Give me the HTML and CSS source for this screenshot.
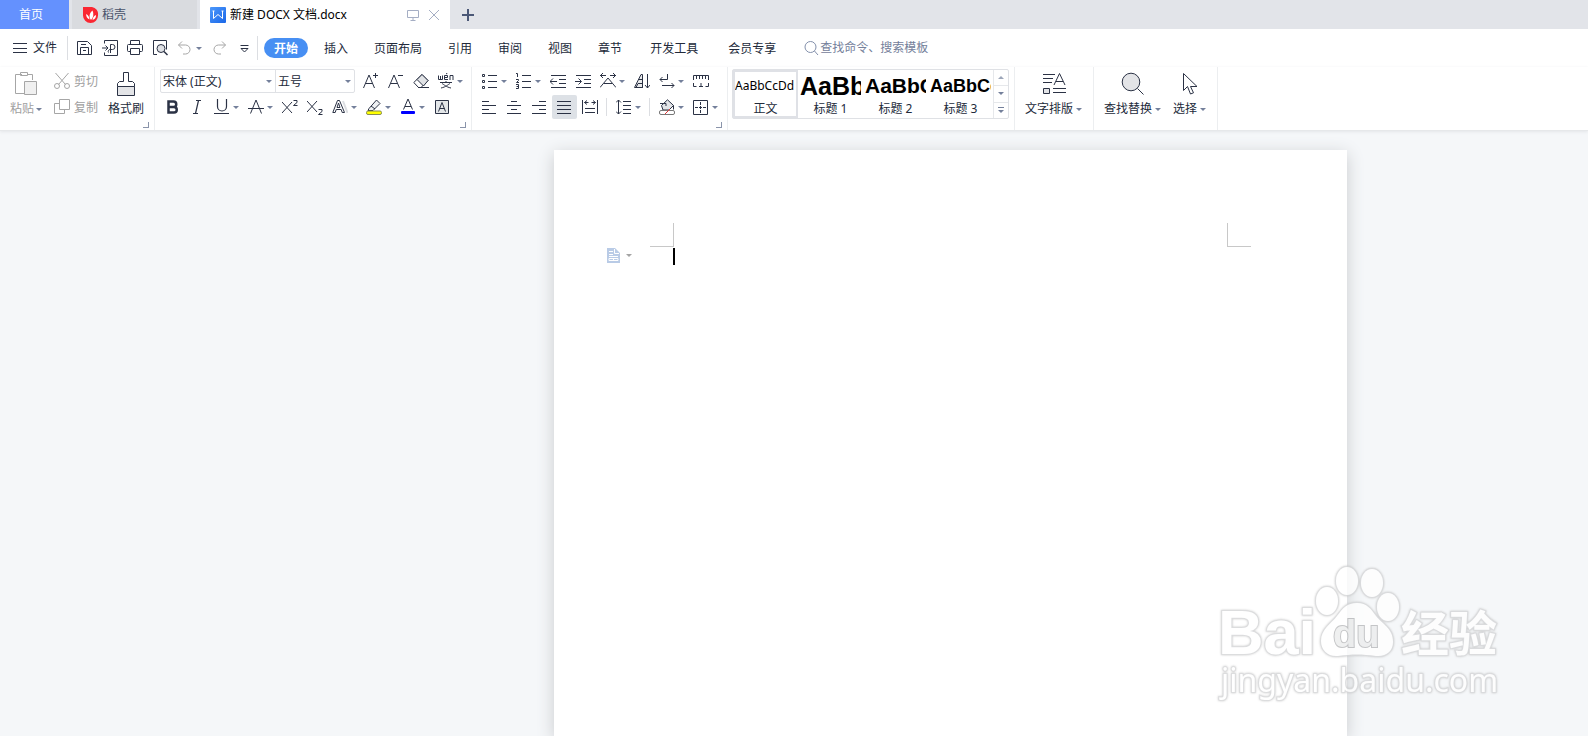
FILE: index.html
```html
<!DOCTYPE html>
<html lang="zh-CN">
  <head>
    <meta charset="utf-8">
    <title>新建 DOCX 文档.docx</title>
    <link rel="stylesheet" href="styles.css">
  </head>
  <body>

    <!-- document tabs -->
    <nav class="tabs">
      <a class="tab home" href="#">首页</a>
      <a class="tab docer" href="#">
        <svg width="16" height="16" viewBox="0 0 16 16"><path d="M0 0h9a7 7 0 0 1 6 8 7.500 7.500 0 0 1-7.500 8A7.500 7.500 0 0 1 0 8.500z" fill="#fa2732" stroke="none"/><path d="M8 13C5.500 10 6.500 6 9.500 3.500 11 7 10.500 10.500 8 13zM6.500 12.500C4 11.500 3 9.500 3.200 7c2 1 3.200 3 3.300 5.500zM9.500 13c.3-2.500 1.500-4.300 3.500-5 .2 2.500-1 4.500-3.500 5z" fill="#fff" stroke="none"/></svg>
        稻壳
      </a>
      <a class="tab active" href="#">
        <svg width="16" height="16" viewBox="0 0 16 16"><defs><linearGradient id="blue" x2="1" y2="1"><stop stop-color="#4c98fb"/><stop offset="1" stop-color="#1a67e8"/></linearGradient></defs><rect width="16" height="16" rx="1" fill="url(#blue)" stroke="none"/><path d="M2.500 4h2M3.500 4v7.500L8 7.500l4.500 4V4M11.500 4h2" stroke="#fff"/></svg>
        <span class="name">新建 DOCX 文档.docx</span>
        <svg class="pale" width="12" height="12" viewBox="0 0 12 12"><path d="M.5 1.500h11v7H.5zM6 8.500v3M3.500 11.500h5"/></svg>
        <svg class="pale" width="12" height="12" viewBox="0 0 12 12"><path d="M1 1l10 10M11 1L1 11"/></svg>
      </a>
      <button class="new" aria-label="新建"><svg width="12" height="12" viewBox="0 0 12 12"><path d="M6 0v12M0 6h12" stroke="#4b5877" stroke-width="2"/></svg></button>
    </nav>

    <!-- menu row -->
    <div class="menu">
      <button class="file"><svg width="14" height="16" viewBox="0 0 14 16"><path d="M0 3.500h14M0 8.500h14M0 12.500h14"/></svg>文件</button>
      <span class="sep tall"></span>
      <button class="ico" aria-label="保存"><svg width="16" height="16" viewBox="0 0 16 16"><path d="M.5 1.500h10l4 4v9H.5zM3.500 14.500v-7h8v7M4 4.500h5M6 10.500h3"/></svg></button>
      <button class="ico" aria-label="输出PDF"><svg width="16" height="16" viewBox="0 0 16 16"><path d="M2.500 3.500v-3h13v15h-13v-3M0 8h5.500M3.500 5.500L6 8l-2.500 2.500M8.500 13V4.500h2a2.500 2.500 0 0 1 0 5h-2a2 2 0 0 0-2 3"/></svg></button>
      <button class="ico" aria-label="打印"><svg width="16" height="16" viewBox="0 0 16 16"><path d="M3.500 4.500v-4h9v4M3.500 11.500h-2a1 1 0 0 1-1-1v-5a1 1 0 0 1 1-1h13a1 1 0 0 1 1 1v5a1 1 0 0 1-1 1h-2M3.500 8.500h9v6h-9z"/></svg></button>
      <button class="ico" aria-label="打印预览"><svg width="16" height="16" viewBox="0 0 16 16"><path d="M5 14.500H1.500V.5h13v9"/><circle cx="9" cy="8.500" r="4" fill="#dfe1e5"/><path d="M12 11.500l3.500 3.500" stroke-width="1.500"/></svg></button>
      <button class="ico off" aria-label="撤销"><svg width="16" height="16" viewBox="0 0 16 16"><path d="M5 1.500L1.500 5 5 8.500M1.500 5h7a4.500 4.500 0 0 1 0 9H6"/></svg><i class="caret"></i></button>
      <button class="ico off" aria-label="恢复"><svg width="16" height="16" viewBox="0 0 16 16"><path d="M11 1.500L14.500 5 11 8.500M14.500 5h-7a4.500 4.500 0 0 0 0 9H10"/></svg></button>
      <button class="ico" aria-label="更多"><svg width="16" height="16" viewBox="0 0 16 16"><path d="M4.500 5.500h8M5 8.500h7L8.500 12z"/></svg></button>
      <span class="sep tall"></span>
      <a class="item current" href="#">开始</a>
      <a class="item" href="#">插入</a>
      <a class="item" href="#">页面布局</a>
      <a class="item" href="#">引用</a>
      <a class="item" href="#">审阅</a>
      <a class="item" href="#">视图</a>
      <a class="item" href="#">章节</a>
      <a class="item wide" href="#">开发工具</a>
      <a class="item wide" href="#">会员专享</a>
      <label class="search">
        <svg width="16" height="16" viewBox="0 0 16 16"><circle cx="6.500" cy="7" r="5.500"/><path d="M10.500 11l3.500 4"/></svg>
        <input type="text" placeholder="查找命令、搜索模板">
      </label>
    </div>

    <!-- ribbon -->
    <div class="ribbon">

      <div class="group clipboard">
        <button class="big off"><svg width="22" height="24" viewBox="0 0 22 24"><path d="M7 2.500H.5v19H9M12 2.500h5.500V8M5.500.5h7v3h-7z"/><path d="M9.500 9.500h12v13h-12z" fill="#f0f0f0"/></svg><span>粘贴<i class="caret"></i></span></button>
        <div class="stack">
          <button class="off"><svg width="16" height="16" viewBox="0 0 16 16"><path d="M1.500 0l10 11.500M14.500 0L4.500 11.500"/><circle cx="3" cy="13" r="2.500"/><circle cx="13" cy="13" r="2.500"/></svg><span>剪切</span></button>
          <button class="off"><svg width="16" height="16" viewBox="0 0 16 16"><path d="M5.500.5h10v10h-10zM5.500 4.500h-5v10h10v-4"/></svg><span>复制</span></button>
        </div>
        <button class="big"><svg width="18" height="24" viewBox="0 0 18 24"><path d="M.5 14.500h17v9H.5z" fill="#e3e4e7"/><path d="M.5 14.500v-3l2-2h4v-9h5v9h4l2 2v3"/></svg><span>格式刷</span></button>
        <i class="corner"></i>
      </div>

      <div class="group">
        <div class="row">
          <div class="fonts">
            <div class="pick family"><select aria-label="字体"><option>宋体 (正文)</option></select><i class="caret"></i></div>
            <div class="pick size"><select aria-label="字号"><option>五号</option></select><i class="caret"></i></div>
          </div>
          <button class="ico" aria-label="增大字号"><svg width="16" height="16" viewBox="0 0 16 16"><path d="M.5 15L6 2l5.500 13M2.500 10.500h7M10 2.500h5M12.500 0v5"/></svg></button>
          <button class="ico" aria-label="减小字号"><svg width="16" height="16" viewBox="0 0 16 16"><path d="M.5 15L6 2l5.500 13M2.500 10.500h7M10 2.500h5"/></svg></button>
          <button class="ico" aria-label="清除格式"><svg width="16" height="16" viewBox="0 0 16 16"><path d="M.8 9.500L9 1.500l6 6-7 7H5.500z"/><path d="M4 6.500l6.500 6.500L15 7.500l-6-6z" fill="#e0e2e5"/><path d="M5 14.500h11"/></svg></button>
          <button class="ico" aria-label="拼音指南"><svg width="16" height="16" viewBox="0 0 16 16"><path d="M.5 2.500v4h4v-4M2.500 3v3.500M6.500 4.500h3v-2h-3v4h3.500M8 1l1.500-1M12 7V2.500h3V7M2 9.500h12M8 8v1.500M4 10.500c2 1 4 3.500 9 4.500M12 10.500c-2 1-4 3.500-9 4.500"/></svg><i class="caret"></i></button>
        </div>
        <div class="row">
          <button class="ico" aria-label="加粗"><svg width="16" height="16" viewBox="0 0 16 16"><path d="M4.500 2.500h5a2.500 2.500 0 0 1 0 5.500h-5zM4.500 8H10a2.700 2.700 0 0 1 0 5.500H4.500z" stroke-width="2.500"/></svg></button>
          <button class="ico" aria-label="倾斜"><svg width="16" height="16" viewBox="0 0 16 16"><path d="M7 1.500h5M4 14.500h5M9.500 1.500l-3 13" stroke-width="1.200"/></svg></button>
          <button class="ico" aria-label="下划线"><svg width="16" height="16" viewBox="0 0 16 16"><path d="M3.500 0v7.500a4 4 0 0 0 9 0V0M0 14.500h15" stroke-width="1.200"/></svg><i class="caret"></i></button>
          <button class="ico" aria-label="删除线"><svg width="16" height="16" viewBox="0 0 16 16"><path d="M2.500 14.500L8 1l5.500 13.500M0 9.500h16"/></svg><i class="caret"></i></button>
          <button class="ico" aria-label="上标"><svg width="16" height="16" viewBox="0 0 16 16"><path d="M0 3l10 11M10 3L0 14M11.500 1.500h3.500v2l-3.500 3h4"/></svg></button>
          <button class="ico" aria-label="下标"><svg width="16" height="16" viewBox="0 0 16 16"><path d="M0 2l10 11M10 2L0 13M11.500 10.500h3.500v2l-3.500 3h4"/></svg></button>
          <button class="ico" aria-label="文字效果"><svg width="16" height="16" viewBox="0 0 16 16"><path d="M11 2l4.500 12" stroke="#dcdee2" stroke-width="2"/><path d="M.8 13.500L5.500 1.500h2l5 12h-2.300l-1-3h-5l-1 3zM5 8.500h3L6.500 4z"/></svg><i class="caret"></i></button>
          <button class="ico" aria-label="突出显示"><svg width="16" height="16" viewBox="0 0 16 16"><path d="M3 9.500L10.500 1 14 4.500 7 11.500H2z" fill="#eef0f2"/><path d="M5 7l4 3"/><rect x=".5" y="12" width="15" height="3.500" rx="1.500" fill="#ff0" stroke="#888d55"/></svg><i class="caret"></i></button>
          <button class="ico" aria-label="字体颜色"><svg width="16" height="16" viewBox="0 0 16 16"><path d="M3.500 10.500L8 0l4.500 10.500M5 7.500h6"/><rect x="1" y="12" width="14" height="3" rx="1" fill="#00f" stroke="none"/></svg><i class="caret"></i></button>
          <button class="ico" aria-label="字符底纹"><svg width="16" height="16" viewBox="0 0 16 16"><path d="M1.500 1.500h13v13h-13z" fill="#e3e6e8"/><path d="M4.500 12.500L8 3.500l3.500 9M5.500 9.500h5"/></svg></button>
        </div>
        <i class="corner"></i>
      </div>

      <div class="group para">
        <div class="row">
          <button class="ico" aria-label="项目符号"><svg width="16" height="16" viewBox="0 0 16 16"><path d="M6 2.500h9M6 8.500h9M6 14.500h9M.5 1.500h2v2h-2zM.5 7.500h2v2h-2zM.5 13.500h2v2h-2z"/></svg><i class="caret"></i></button>
          <button class="ico" aria-label="编号"><svg width="16" height="16" viewBox="0 0 16 16"><path d="M6 2.500h9M6 8.500h9M6 14.500h9M0 .500h1.500V4M0 6.500h2.500v1L.5 9.500h2.500M0 11.500h2.500v4H0M.5 13.500h2"/></svg><i class="caret"></i></button>
          <button class="ico" aria-label="减少缩进"><svg width="16" height="16" viewBox="0 0 16 16"><path d="M1 2.500h15M9 6.500h7M9 10.500h7M1 14.500h15M0 8.500h7M3 5.500l-3 3 3 3"/></svg></button>
          <button class="ico" aria-label="增加缩进"><svg width="16" height="16" viewBox="0 0 16 16"><path d="M1 2.500h15M9 6.500h7M9 10.500h7M1 14.500h15M0 8.500h6M3.500 5.500l3 3-3 3"/></svg></button>
          <button class="ico" aria-label="中文版式"><svg width="16" height="16" viewBox="0 0 16 16"><path d="M0 2.500h6M3 0L.5 2.500 3 5M10 2.500h6M13 0l2.500 2.500L13 5M0 14.500L8 5l8 9.500M4 10.500h8"/></svg><i class="caret"></i></button>
          <button class="ico" aria-label="排序"><svg width="16" height="16" viewBox="0 0 16 16"><path d="M.5 14.500L7 1.500h1.500v13zM4 10.500h4.500v4H2z" fill="#e9eaec"/><path d="M5 6.500h3.500M13.500 1v14M11 12l2.500 3 2.500-3"/></svg></button>
          <button class="ico" aria-label="段落标记"><svg width="16" height="16" viewBox="0 0 16 16"><path d="M8.500 1v5.500H1M3.500 4L1 6.500 3.500 9M3 12.500h12M12.500 10l2.500 2.500-2.500 2.500"/></svg><i class="caret"></i></button>
          <button class="ico" aria-label="制表位"><svg width="16" height="16" viewBox="0 0 16 16"><path d="M.5 7V2.500h15V7M3.500 3v3M6.500 3v3M9.500 3v3M12.500 3v3M.5 10v3.500h3M6 13.500h4M8 10v3.500M15.500 10v3.500h-3"/></svg></button>
        </div>
        <div class="row">
          <button class="ico" aria-label="左对齐"><svg width="16" height="16" viewBox="0 0 16 16"><path d="M0 2.500h7M0 6.500h14M0 10.500h7M0 14.500h14"/></svg></button>
          <button class="ico" aria-label="居中"><svg width="16" height="16" viewBox="0 0 16 16"><path d="M4 2.500h6M0 6.500h14M4 10.500h6M0 14.500h14"/></svg></button>
          <button class="ico" aria-label="右对齐"><svg width="16" height="16" viewBox="0 0 16 16"><path d="M7 2.500h7M0 6.500h14M7 10.500h7M0 14.500h14"/></svg></button>
          <button class="ico on" aria-label="两端对齐"><svg width="16" height="16" viewBox="0 0 16 16"><path d="M0 2.500h14M0 6.500h14M0 10.500h14M0 14.500h14"/></svg></button>
          <button class="ico" aria-label="分散对齐"><svg width="16" height="16" viewBox="0 0 16 16"><path d="M.5 1v14M15.500 1v14M3 9.500h10M3 13.500h10M2.500 3.500h4M5 1.500l-2.500 2L5 5.500M9.500 3.500h4M11 1.500l2.500 2-2.500 2"/></svg></button>
          <span class="sep"></span>
          <button class="ico" aria-label="行距"><svg width="16" height="16" viewBox="0 0 16 16"><path d="M7 2.500h8M7 6.500h8M7 10.500h8M7 14.500h8M2.500 1v14M0 3.500L2.500 1 5 3.500M0 12.500L2.500 15 5 12.500"/></svg><i class="caret"></i></button>
          <span class="sep"></span>
          <button class="ico" aria-label="底纹颜色"><svg width="16" height="16" viewBox="0 0 16 16"><path d="M2.500 6.500L8.500.8l6 5.700-4.500 4.500H4z" fill="#e3e5e8"/><path d="M1 4.500h6V7M14.500 6.500v4"/><rect x=".5" y="11.500" width="15" height="4" rx="1.500" fill="#fff" stroke="#777"/><path d="M6 15l5-5" stroke="#e03838"/></svg><i class="caret"></i></button>
          <button class="ico" aria-label="边框"><svg width="16" height="16" viewBox="0 0 16 16"><path d="M.5 1.500h14v14H.5z"/><path d="M7.500 3v11M2 8.500h11" stroke-dasharray="3 1"/></svg><i class="caret"></i></button>
        </div>
        <i class="corner"></i>
      </div>

      <div class="group styles">
        <div class="gallery">
          <button class="style chosen"><span class="sample">AaBbCcDd</span><span>正文</span></button>
          <button class="style"><span class="sample h1">AaBb</span><span>标题 1</span></button>
          <button class="style"><span class="sample h2">AaBbC</span><span>标题 2</span></button>
          <button class="style"><span class="sample h3">AaBbCc</span><span>标题 3</span></button>
          <div class="scroll">
            <button aria-label="上一行"><i class="caret up"></i></button>
            <button aria-label="下一行"><i class="caret"></i></button>
            <button aria-label="展开"><i class="line"></i><i class="caret"></i></button>
          </div>
        </div>
      </div>

      <div class="group tools">
        <button class="big"><svg width="24" height="24" viewBox="0 0 24 24"><path d="M1 2.500h12M1 6.500h10M1 10.500h9M11 20.500h13M11 16.500h13M12 13l5.500-11.500L23 13M14 9.500h7"/><path d="M1.500 16.500h6v5h-6z" fill="#e3e4e7"/></svg><span>文字排版<i class="caret"></i></span></button>
      </div>

      <div class="group tools">
        <button class="big"><svg width="24" height="24" viewBox="0 0 24 24"><circle cx="10" cy="10" r="8.800" fill="#e3e4e7"/><path d="M16.500 16.500l6 6"/></svg><span>查找替换<i class="caret"></i></span></button>
        <button class="big"><svg width="16" height="24" viewBox="0 0 16 24"><path d="M1.500 1.500v17l4-4 3 7.500 3-1.200-3-6.300h6.500z"/></svg><span>选择<i class="caret"></i></span></button>
      </div>
    </div>

    <!-- document -->
    <main class="desk">
      <div class="page">
        <div class="marks"><i class="mark left"></i><i class="mark right"></i></div>
        <div class="line1">
          <button class="layout" aria-label="版式"><svg width="13" height="15" viewBox="0 0 13 15"><path d="M0 0h8l5 5v10H0z" fill="#b9cbe6" stroke="none"/><path d="M7.500 1v4.500H12M2 3.500h4M2 6.500h4M2 8.500h9M2 10.500h9v2H2zM6.500 10v3" stroke="#fff"/></svg><i class="caret"></i></button>
          <span class="cursor"></span>
        </div>
      </div>
    </main>

    <svg class="watermark" width="300" height="150" viewBox="0 0 300 150">
      <g class="paw">
        <ellipse cx="116" cy="41" rx="11" ry="14"/>
        <ellipse cx="136" cy="21" rx="11" ry="14"/>
        <ellipse cx="161" cy="23" rx="11" ry="14"/>
        <ellipse cx="177" cy="47" rx="11" ry="14"/>
        <path d="M146 43c10 0 14 6 19 13 6 8 17 12 17 26 0 9-7 15-17 14-14-2-24-2-38 0-10 1-17-6-17-15 0-12 10-17 16-25 6-8 10-13 20-13z"/>
      </g>
      <text class="logo" x="7" y="94">Bai</text>
      <text class="du" x="122" y="87">du</text>
      <text class="cn" x="190" y="91">经验</text>
      <text class="url" x="10" y="132">jingyan.baidu.com</text>
    </svg>

  </body>
</html>
```
FILE: styles.css
```css
* {
  box-sizing: border-box;
}
body {
  margin: 0;
  height: 100vh;
  display: flex;
  flex-direction: column;
  overflow: hidden;
  position: relative;
  background: #f5f7f9;
  color: #222a3a;
  font: 12px/18px "Noto Sans", "Noto Sans CJK SC", sans-serif;
}
button, select, input {
  font: inherit;
  color: inherit;
  background: none;
  border: 0;
  padding: 0;
  margin: 0;
}
a {
  color: inherit;
  text-decoration: none;
}
svg {
  flex: none;
  fill: none;
  stroke: #2b3245;
}

/* tabs */
.tabs {
  display: flex;
  flex: none;
  gap: 3px;
  height: 29px;
  background: #e2e4e9;
}
.tab {
  display: flex;
  align-items: center;
  gap: 4px;
}
.home {
  width: 69px;
  justify-content: center;
  padding-right: 7px;
  background: #6491fe;
  color: #fff;
}
.docer {
  width: 125px;
  gap: 3px;
  padding-left: 11px;
  background: #d9dbdf;
  color: #4a536b;
}
.active {
  width: 250px;
  padding: 0 10px;
  background: #fff;
  color: #000;
}
.active .name {
  flex: 1;
}
.active .pale {
  margin-left: 5px;
  stroke: #a5aec4;
}
.new {
  display: flex;
  align-items: center;
  padding: 0 9px;
}

/* menu */
.menu {
  display: flex;
  flex: none;
  align-items: center;
  height: 38px;
  padding-left: 13px;
  background: #fff;
}
.file {
  display: flex;
  align-items: center;
  gap: 6px;
}
.sep {
  width: 1px;
  height: 18px;
  margin: 0 4px;
  background: #dcdee2;
}
.sep.tall {
  height: 24px;
}
.file + .sep {
  margin-left: 10px;
}
.ico + .sep.tall {
  margin-left: 1px;
}
.sep + .item {
  margin: 0 3px 0 2px;
}
.item {
  padding: 2px 13px 0;
}
.item.wide {
  padding: 2px 15px 0;
}
.item.current {
  padding: 2px 10px 0;
  border-radius: 10px;
  background: #478ff3;
  color: #fff;
  font-weight: bold;
}
.search {
  display: flex;
  align-items: center;
  padding-left: 13px;
}
.search svg {
  stroke: #8390ab;
}
.search input {
  width: 140px;
}
.search input::placeholder {
  color: #74809a;
}

/* ribbon */
.ribbon {
  display: flex;
  flex: none;
  height: 64px;
  background: #fff;
  border-bottom: 1px solid #e6e8ea;
  box-shadow: 0 1px 3px #e4e6e9;
}
.group {
  position: relative;
  padding: 2px 4px;
  border-right: 1px solid #eceef0;
}
.para {
  padding: 2px 5px;
}
.row {
  display: flex;
  align-items: center;
  height: 24px;
  margin-bottom: 2px;
}
.ico {
  display: flex;
  align-items: center;
  gap: 3px;
  height: 24px;
  padding: 0 4px 0 5px;
}
.on {
  border-radius: 2px;
  background: #dde1e6;
}
.off {
  color: #a0a0a0;
}
.off svg {
  stroke: #a6a6a6;
}
.caret {
  display: inline-block;
  border: 3px solid transparent;
  border-top-color: #74809b;
  border-bottom: 0;
  width: 6px;
}
.corner {
  position: absolute;
  right: 5px;
  bottom: 2px;
  width: 6px;
  height: 6px;
  border: solid #8a94aa;
  border-width: 0 1px 1px 0;
}

.big {
  display: flex;
  flex-direction: column;
  align-items: center;
  padding-top: 3px;
  gap: 4px;
}
.big span {
  display: flex;
  align-items: center;
  gap: 2px;
}
.clipboard {
  display: flex;
  width: 155px;
  padding-left: 10px;
}
.stack {
  display: flex;
  flex-direction: column;
  gap: 2px;
  margin: 0 10px 0 12px;
}
.stack button {
  display: flex;
  align-items: center;
  gap: 4px;
  height: 24px;
}
.stack span {
  padding-top: 2px;
}

.fonts {
  display: flex;
  width: 195px;
  margin: 0 3px 0 1px;
  height: 24px;
  border: 1px solid #dfe1e5;
  border-radius: 2px;
}
.pick {
  position: relative;
  flex: 1;
}
.pick.family {
  flex: none;
  width: 115px;
  border-right: 1px solid #dfe1e5;
}
.pick select {
  appearance: none;
  width: 100%;
  height: 22px;
  padding: 2px 0 0 2px;
}
.pick .caret {
  position: absolute;
  right: 3px;
  top: 10px;
}

.gallery {
  display: flex;
  height: 50px;
  border: 1px solid #dfe1e5;
  border-radius: 2px;
}
.style {
  display: flex;
  flex-direction: column;
  align-items: center;
  width: 65px;
  padding: 0 2px;
  border: solid transparent;
  border-width: 2px 0;
}
.chosen {
  padding: 0;
  border: 2px solid #dfe1e6;
}
.style span {
  flex: none;
}
.sample {
  width: 61px;
  height: 28px;
  line-height: 28px;
  overflow: hidden;
  text-align: left;
  white-space: nowrap;
  color: #000;
}
.h1, .h2, .h3 {
  font-family: "Liberation Sans", sans-serif;
  font-weight: bold;
}
.h1 {
  font-size: 25px;
}
.h2 {
  font-size: 21px;
}
.h3 {
  font-size: 18px;
}
.scroll {
  display: flex;
  flex-direction: column;
  width: 15px;
  border-left: 1px solid #e6e8eb;
}
.scroll button {
  display: flex;
  flex: 1;
  flex-direction: column;
  align-items: center;
  justify-content: center;
  gap: 2px;
}
.scroll button + button {
  border-top: 1px solid #e6e8eb;
}
.up {
  transform: rotate(180deg);
  opacity: .7;
}
.line {
  width: 6px;
  height: 1px;
  background: #74809b;
}
.styles {
  padding-right: 5px;
}
.tools {
  display: flex;
  gap: 12px;
  padding: 2px 11px 2px 10px;
}
.tools .big span {
  gap: 3px;
}

/* document */
.desk {
  display: flex;
  flex: 1;
  padding: 19px 241px 0 0;
  justify-content: flex-end;
}
.page {
  width: 793px;
  padding-top: 73px;
  background: #fff;
  box-shadow: 0 4px 16px #c9cbce;
}
.marks {
  display: flex;
  justify-content: space-between;
  padding: 0 96px;
}
.mark {
  width: 24px;
  height: 24px;
  border: 0 solid #c8c8c8;
  border-bottom-width: 1px;
}
.mark.left {
  border-right-width: 1px;
}
.mark.right {
  border-left-width: 1px;
}
.line1 {
  display: flex;
  justify-content: space-between;
  align-items: flex-start;
  width: 121px;
  padding: 1px 0 0 53px;
}
.layout {
  display: flex;
  align-items: center;
  gap: 6px;
}
.layout .caret {
  border-top-color: #a4a4a4;
}
.cursor {
  width: 2px;
  height: 17px;
  background: #000;
}

/* watermark */
.watermark {
  position: absolute;
  right: 77px;
  bottom: 26px;
  opacity: .8;
  filter: drop-shadow(0 0 1px #bbb);
}
.watermark text, .paw {
  fill: #fff;
  stroke: #d4d5d7;
  stroke-width: 2px;
  paint-order: stroke;
  font-weight: bold;
}
.watermark .logo {
  font-family: "Liberation Sans", sans-serif;
  font-size: 63px;
}
.watermark .du {
  font-family: "Liberation Sans", sans-serif;
  font-size: 38px;
  fill: #eceded;
  stroke: #b8b9bb;
}
.watermark .cn {
  font-family: "Noto Sans CJK SC", sans-serif;
  font-size: 48px;
}
.watermark .url {
  font-family: "Noto Sans", sans-serif;
  font-size: 32px;
  font-weight: normal;
}
```
